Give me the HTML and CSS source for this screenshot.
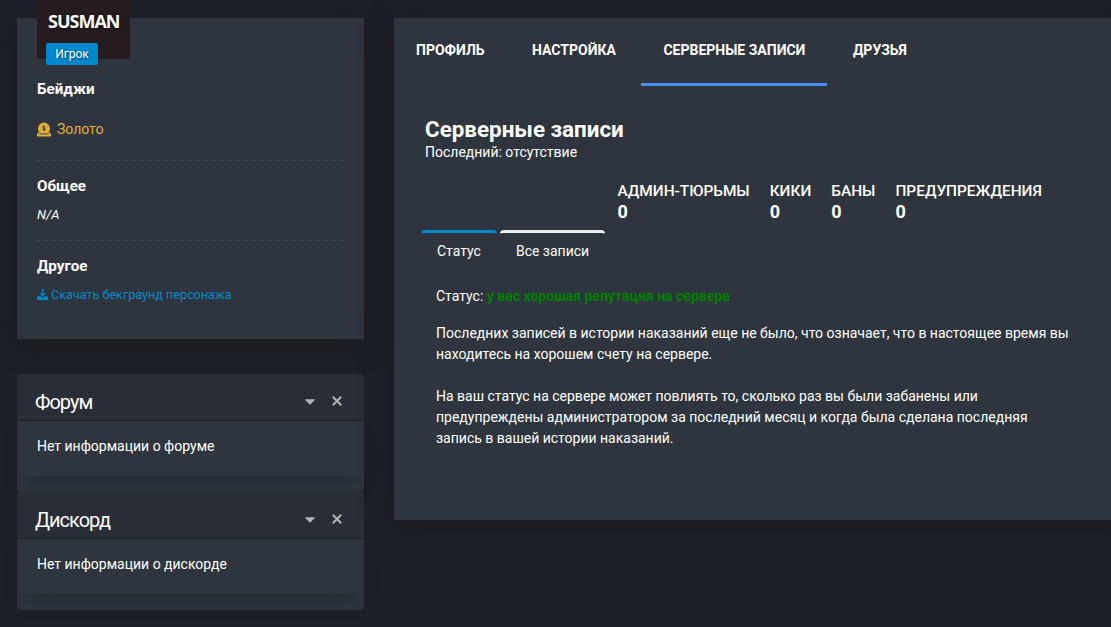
FILE: index.html
```html
<!DOCTYPE html>
<html lang="ru">
<head>
<meta charset="utf-8">
<title>Серверные записи</title>
<link rel="stylesheet" href="styles.css">
</head>
<body>
<main class="page">
  <aside class="sidebar">
    <section class="card user">
      <div class="thumb">
        <span class="thumb-name">SUSMAN</span>
        <span class="thumb-role">Игрок</span>
      </div>
      <h5 class="heading">Бейджи</h5>
      <p class="gold">
        <svg class="gold-icon" viewBox="0 0 14 15"><path fill="currentColor" d="M2.4 10.4a6 6 0 1 1 9.2 0H12.5L14 12v1.7a.8.8 0 0 1-.8.8H.8a.8.8 0 0 1-.8-.8V12l1.5-1.6z"/><path d="M2.2 11.9h9.6M8.4 5C7.9 4.4 5.6 4.2 5.6 5.4c0 1.1 2.8.7 2.8 1.9 0 1.2-2.2 1-2.8.4M7 3.6v5.2" fill="none" stroke="#3b3932" stroke-width=".9"/></svg>
        <span>Золото</span>
      </p>
      <hr class="dotted">
      <h5 class="heading">Общее</h5>
      <p class="about"><em>N/A</em></p>
      <hr class="dotted">
      <h5 class="heading">Другое</h5>
      <a class="download">
        <svg class="download-icon" viewBox="0 0 11 11"><path fill="currentColor" d="M5 0h1.2v4.2h2.6L5.6 7.4 2.4 4.2H5zM.5 7.3h3l2.1 1.6 2.1-1.6h2.8q.5 0 .5.5v2.7q0 .5-.5.5H.5q-.5 0-.5-.5V7.800q0-.5.5-.5z"/></svg>
        <span>Скачать бекграунд персонажа</span>
      </a>
    </section>
    <section class="widget">
      <header class="widget-head">
        <h2 class="widget-title">Форум</h2>
        <svg class="caret" viewBox="0 0 10 6"><path fill="currentColor" d="M.7.3h8.6a.5.5 0 0 1 .4.8L5.6 5.2a.8.8 0 0 1-1.2 0L.3 1.1A.5.5 0 0 1 .7.3z"/></svg>
        <svg class="close" viewBox="0 0 10 10"><path d="M.8.8l8.400 8.400M9.200.8L.8 9.200" fill="none" stroke="currentColor" stroke-width="2"/></svg>
      </header>
      <div class="widget-body">Нет информации о форуме</div>
    </section>
    <section class="widget">
      <header class="widget-head">
        <h2 class="widget-title">Дискорд</h2>
        <svg class="caret" viewBox="0 0 10 6"><path fill="currentColor" d="M.7.3h8.6a.5.5 0 0 1 .4.8L5.6 5.2a.8.8 0 0 1-1.2 0L.3 1.1A.5.5 0 0 1 .7.3z"/></svg>
        <svg class="close" viewBox="0 0 10 10"><path d="M.8.8l8.400 8.400M9.200.8L.8 9.200" fill="none" stroke="currentColor" stroke-width="2"/></svg>
      </header>
      <div class="widget-body">Нет информации о дискорде</div>
    </section>
  </aside>
  <section class="card content">
    <nav class="tabs">
      <a class="tab">ПРОФИЛЬ</a>
      <a class="tab">НАСТРОЙКА</a>
      <a class="tab active">СЕРВЕРНЫЕ ЗАПИСИ</a>
      <a class="tab">ДРУЗЬЯ</a>
    </nav>
    <h1 class="title">Серверные записи</h1>
    <p class="subtitle">Последний: отсутствие</p>
    <div class="stats">
      <div class="stat"><span>АДМИН-ТЮРЬМЫ</span><b>0</b></div>
      <div class="stat"><span>КИКИ</span><b>0</b></div>
      <div class="stat"><span>БАНЫ</span><b>0</b></div>
      <div class="stat"><span>ПРЕДУПРЕЖДЕНИЯ</span><b>0</b></div>
    </div>
    <nav class="subtabs">
      <a class="subtab current">Статус</a>
      <a class="subtab all">Все записи</a>
    </nav>
    <div class="record">
      <p class="status">Статус: <strong class="good">у вас хорошая репутация на сервере</strong></p>
      <p class="text">Последних записей в истории наказаний еще не было, что означает, что в настоящее время вы<br>находитесь на хорошем счету на сервере.</p>
      <p class="text">На ваш статус на сервере может повлиять то, сколько раз вы были забанены или<br>предупреждены администратором за последний месяц и когда была сделана последняя<br>запись в вашей истории наказаний.</p>
    </div>
  </section>
</main>
</body>
</html>
```
FILE: styles.css
```css
* { box-sizing: border-box; }
body {
  margin: 0;
  background: #1d2028;
  color: #fff;
  font: 14px/21px Roboto, "Noto Sans", sans-serif;
}
h1, h2, h5, p { margin: 0; }
.page {
  display: flex;
  align-items: flex-start;
  gap: 30px;
  width: 1111px;
  height: 627px;
  padding: 18px 0 0 17px;
  overflow: hidden;
}
.card {
  background: #2e353e;
  box-shadow: 0 5px 24px rgba(27, 27, 27, .75);
}
.sidebar { flex: 0 0 347px; }
.user {
  display: flow-root;
  height: 321px;
  margin-bottom: 35px;
  padding: 0 20px;
}
.thumb {
  display: flex;
  flex-direction: column;
  align-items: flex-start;
  width: 93px;
  height: 59px;
  margin-top: -18px;
  padding: 10px 0 0 9px;
  background: #261b1e;
}
.thumb-name {
  flex: none;
  height: 33px;
  padding-left: 2px;
  font: 700 18px/23px "Open Sans", sans-serif;
  letter-spacing: -1px;
  text-shadow: 1px 1px 3px rgba(0, 0, 0, .5);
}
.thumb-role {
  flex: none;
  width: 52px;
  height: 22px;
  background: #0088cc;
  border-radius: 2px;
  font-size: 12px;
  line-height: 22px;
  text-align: center;
  text-shadow: 1px 1px 3px rgba(0, 0, 0, .5);
}
.heading {
  font-size: 15.2px;
  font-weight: 700;
  line-height: 20px;
}
.thumb + .heading { margin-top: 20px; }
.gold {
  display: flex;
  align-items: center;
  gap: 6px;
  margin-top: 20px;
  color: #e0ae3e;
}
.gold-icon { width: 14px; height: 15px; margin-top: -1px; }
.dotted {
  margin: 20px 0 15px;
  border: 0;
  border-top: 1px dotted #4b525d;
}
.about {
  margin-top: 9px;
  font-size: 13px;
  line-height: 20px;
}
.about + .dotted { margin-top: 15px; }
.download {
  display: flex;
  align-items: center;
  gap: 3px;
  margin-top: 9px;
  color: #0088cc;
  font-size: 12.6px;
  line-height: 20px;
}
.download-icon { width: 11px; height: 11px; margin-top: -1px; }
.widget {
  height: 118px;
  background: #2e353e;
  border-radius: 4px;
}
.widget-head {
  display: flex;
  align-items: center;
  height: 47px;
  padding: 9px 22px 0 18px;
  background: #282d36;
  border-bottom: 1px solid #1d2127;
  border-radius: 4px 4px 0 0;
  color: #b4b4b4;
}
.widget-title {
  flex: 1;
  padding-top: 2px;
  color: #fff;
  font-size: 20px;
  font-weight: 400;
  letter-spacing: -1px;
}
.caret { width: 10px; height: 6px; margin: 0 17px 0 0; }
.close { width: 10px; height: 10px; margin-top: -2px; }
.widget-body {
  height: 55px;
  padding: 15px 20px;
  border-radius: 0 0 4px 4px;
  box-shadow: 0 12px 20px -10px rgba(27, 30, 34, .55);
}
.content {
  flex: 0 0 740px;
  height: 502px;
}
.tabs {
  display: flex;
  gap: 3.5px;
  height: 68px;
}
.tab {
  padding: 22px 22px 0;
  font-weight: 700;
}
.active { border-bottom: 3px solid #4b8df8; }
.title {
  margin: 29px 0 0 31px;
  font-size: 22.4px;
  font-weight: 700;
  line-height: 28px;
}
.subtitle { margin: -1px 0 0 31px; line-height: 20px; }
.stats {
  display: flex;
  gap: 20px;
  margin: 19px 0 0 223.5px;
  font-size: 15.4px;
  font-weight: 500;
}
.stat { display: flex; flex-direction: column; }
.stat b { margin-top: -1px; font-size: 18px; }
.subtabs {
  display: flex;
  gap: 3px;
  margin: 8px 0 0 27px;
}
.subtab {
  padding: 8px 16px 0;
  border-top: 3px solid #eee;
  border-radius: 4px 4px 0 0;
}
.subtab.current { border-top-color: #0088cc; }
.record { padding: 24px 0 0 42px; }
.text { margin-top: 16px; }
.text + .text { margin-top: 21px; }
.good { color: #008000; }
```
